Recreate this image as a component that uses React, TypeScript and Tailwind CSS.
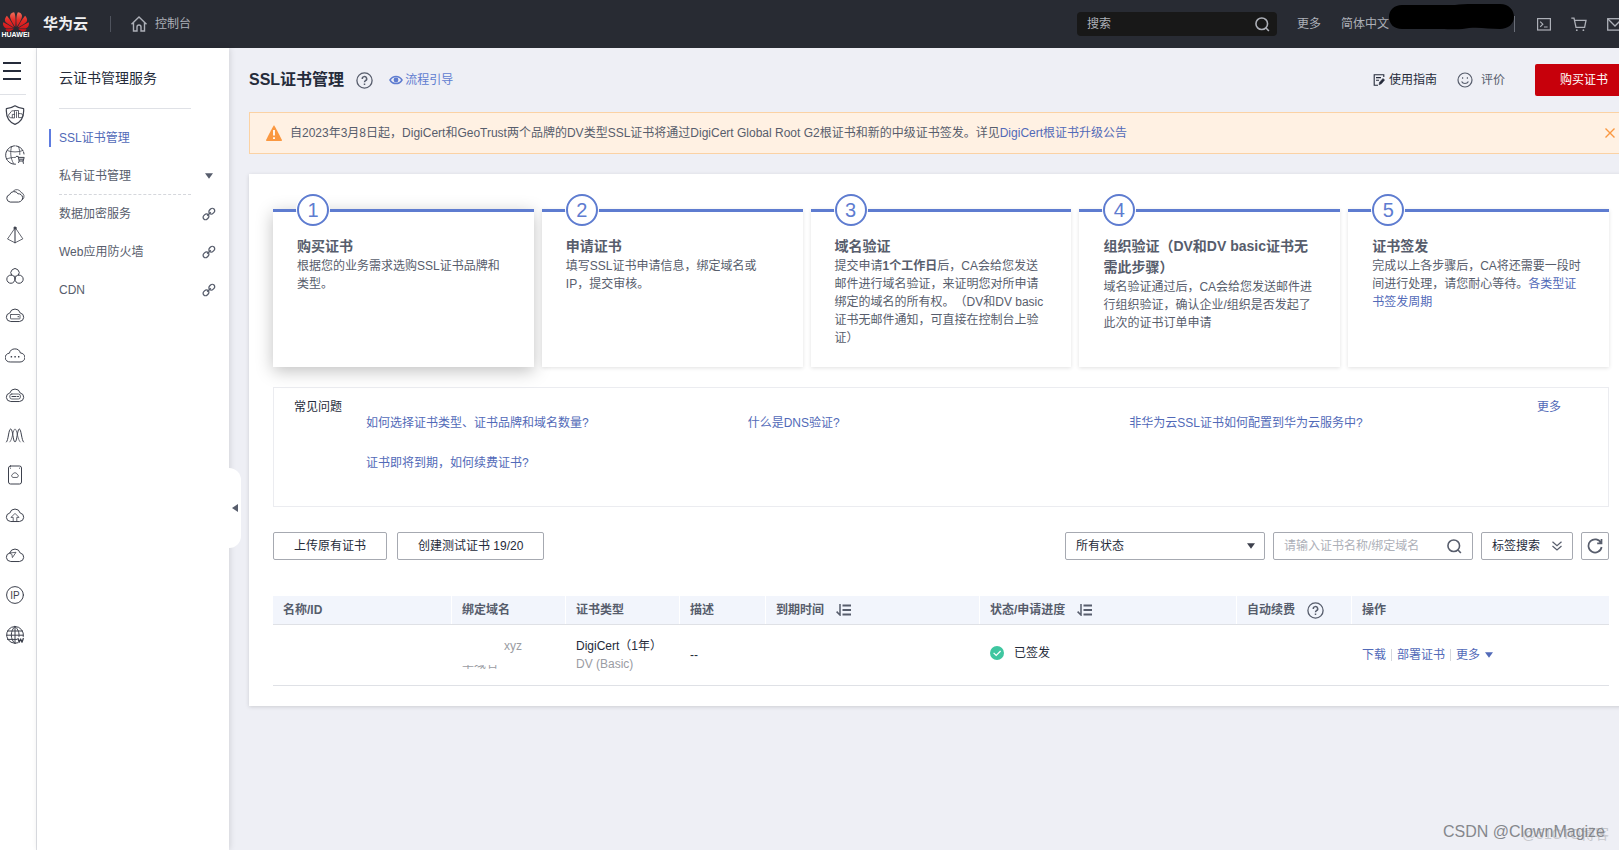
import type { ReactNode } from 'react';
import { SiHuawei } from 'react-icons/si';

const CLOUD = 'M5.4 16.5A4.3 4.3 0 0 1 4.8 8A5.4 5.4 0 0 1 15.2 8A4.3 4.3 0 0 1 14.8 16.5Z';

const railIcons: { label: string; art: ReactNode }[] = [
  {
    label: '安全',
    art: (
      <>
        <path d="M10 .8C12.5 2.6 15.5 3.4 18.6 3.6C19.2 11 16 17 10 19.4C4 17 .8 11 1.4 3.6C4.5 3.4 7.5 2.6 10 .8Z" strokeWidth="1.2" />
        <path d="M5.2 12.6A2.3 2.3 0 0 1 5.2 8.2A3.4 3.4 0 0 1 9.5 6V12.6ZM9.5 5.5H13.5V12.6H16A2 2 0 0 0 15.5 8.6H13.5M11.5 7V12.6M7.3 12.6V9.4H9.5" strokeWidth=".8" />
      </>
    ),
  },
  {
    label: '域名购买',
    art: (
      <>
        <path d="M10.5 19.2A9.2 9.2 0 1 1 19 9" strokeDasharray="9 1.2" />
        <path d="M6.5 1.8C5.2 6.5 5.2 13 8.5 18.4M13.5 1.8C14.6 4.4 14.9 7 14.8 9.5M2.3 5.6C7 7.4 13 7.4 17.7 5.6M1.5 14C5 12.6 8 12.4 10.5 12.4" strokeWidth=".8" />
        <path d="M11.3 11.4H13.2L14.2 16H18.2L19.2 12.4H13.5M14.2 16L13.6 17.6M18 16L18.4 18.4M14.5 14.2H18.5" />
      </>
    ),
  },
  {
    label: '弹性云',
    art: (
      <>
        <path d="M4.8 17A3.8 3.8 0 0 1 4.6 9.6A4.7 4.7 0 0 1 13 8.8A4 4 0 0 1 14 17Z" />
        <path d="M8.5 5.8A4.6 4.6 0 0 1 16 7.4A4.2 4.2 0 0 1 17.6 14.6" strokeWidth=".8" />
      </>
    ),
  },
  {
    label: '加速',
    art: (
      <>
        <path d="M10 3L2.5 14L10 17.8L17.5 14Z" strokeWidth=".8" />
        <path d="M10 3V17.8" strokeWidth="1.1" />
        <circle cx="10" cy="3" r="1.1" fill="currentColor" />
      </>
    ),
  },
  {
    label: '容器',
    art: <path d="M6.6 10.3A4.2 4.2 0 1 1 13.4 10.3M10 13.8A4.1 4.1 0 1 1 6.3 10.1C8.3 10 10 11.8 10 13.8A4.1 4.1 0 1 0 13.7 10.1C11.7 10 10 11.8 10 13.8M10 11V13" />,
  },
  {
    label: '云服务器',
    art: (
      <>
        <path d={CLOUD} />
        <rect x="5.5" y="9.5" width="9.5" height="4.4" rx=".5" strokeWidth=".8" />
        <path d="M13 11.7H13.6" />
      </>
    ),
  },
  {
    label: '更多云',
    art: (
      <>
        <path d="M4.8 17A4.4 4.4 0 0 1 4.4 8.2A5.7 5.7 0 0 1 15.4 8A4.5 4.5 0 0 1 15.4 17Z" />
        <path d="M5.7 11.8H7.1M9.4 11.8H10.8M13 11.8H14.4" strokeWidth="1.6" strokeLinecap="butt" />
      </>
    ),
  },
  {
    label: '云硬盘',
    art: (
      <>
        <path d={CLOUD} />
        <rect x="4.8" y="9" width="10.6" height="5" rx="2" strokeWidth=".8" />
        <path d="M7 11.5H11M12.5 11.5H13.5" strokeWidth="1.2" />
      </>
    ),
  },
  {
    label: '网络',
    art: (
      <>
        <path d="M1.5 17C3.5 15.5 3.5 4 5.7 4S8 17 10 17S12.3 4 14.3 4S16.5 15.5 18.5 17" />
        <path d="M4.8 17C7.5 15 8 4 10 4S12.5 15 15.2 17" strokeWidth=".7" />
      </>
    ),
  },
  {
    label: '存储',
    art: (
      <>
        <rect x="3.5" y="1" width="13" height="18" rx="2" />
        <path d="M7.6 12.3A1.6 1.6 0 0 1 7.7 9.3A2.4 2.4 0 0 1 12.2 9.3A1.6 1.6 0 0 1 12.4 12.3Z" strokeWidth=".8" />
        <path d="M5.5 3.2H5.6M14.4 3.2H14.5" />
      </>
    ),
  },
  {
    label: '云备份',
    art: (
      <>
        <path d={CLOUD} />
        <path d="M8.2 16.3V12.4H6L10 8.4L14 12.4H11.8V16.3" strokeWidth=".8" />
      </>
    ),
  },
  {
    label: '云专线',
    art: (
      <>
        <path d={CLOUD} />
        <path d="M4.8 8L11 7.3L7.4 12.6L7 9.8Z" strokeWidth=".8" />
      </>
    ),
  },
  {
    label: '弹性公网IP',
    art: (
      <>
        <circle cx="10" cy="10" r="8.4" />
        <text x="10" y="13.6" textAnchor="middle" fontSize="10" fill="currentColor" stroke="none">IP</text>
      </>
    ),
  },
  {
    label: '网站',
    art: (
      <>
        <path d="M13 17.8A8.4 8.4 0 1 1 18.3 11.5M10 1.6V18.4M10 1.6C5 5.5 5 14.5 10 18.4M10 1.6C13.3 4.2 14.4 8 14 11.5M2.5 6H17.5M1.6 10.2H18.3M2.5 14.4H12" />
        <path d="M13 13.5L14.2 17.2L15.6 14L17 17.2L18.3 13.5" strokeWidth="1.3" />
      </>
    ),
  },
];

const steps: { title: string; body: ReactNode }[] = [
  { title: '购买证书', body: '根据您的业务需求选购SSL证书品牌和类型。' },
  { title: '申请证书', body: '填写SSL证书申请信息，绑定域名或IP，提交审核。' },
  {
    title: '域名验证',
    body: (
      <>
        提交申请<b>1个工作日</b>后，CA会给您发送邮件进行域名验证，来证明您对所申请绑定的域名的所有权。（DV和DV basic证书无邮件通知，可直接在控制台上验证）
      </>
    ),
  },
  {
    title: '组织验证（DV和DV basic证书无需此步骤）',
    body: '域名验证通过后，CA会给您发送邮件进行组织验证，确认企业/组织是否发起了此次的证书订单申请',
  },
  {
    title: '证书签发',
    body: (
      <>
        完成以上各步骤后，CA将还需要一段时间进行处理，请您耐心等待。
        <a href="#" className="text-[#526ab8]">各类型证书签发周期</a>
      </>
    ),
  },
];

const faqs = [
  '如何选择证书类型、证书品牌和域名数量?',
  '什么是DNS验证?',
  '非华为云SSL证书如何配置到华为云服务中?',
  '证书即将到期，如何续费证书?',
];

function SearchIcon({ className }: { className?: string }) {
  return (
    <svg viewBox="0 0 16 16" className={className} fill="none" stroke="currentColor" strokeWidth="1.7">
      <circle cx="7.2" cy="7.2" r="6.2" />
      <path d="M11.5 11.5L14.8 15" />
    </svg>
  );
}

function HelpIcon() {
  return (
    <svg viewBox="0 0 17 17" className="size-[17px] text-[#575d6c]" fill="none" stroke="currentColor" strokeWidth="1.3">
      <circle cx="8.5" cy="8.5" r="7.6" />
      <path d="M6.3 7A2.2 2.2 0 1 1 9.5 8.7C8.7 9.2 8.5 9.5 8.5 10.3" strokeWidth="1.5" />
      <path d="M8.5 11.5V13" strokeWidth="1.5" />
    </svg>
  );
}

function SortIcon() {
  return (
    <svg viewBox="0 0 15 12" className="h-3 w-[15px] text-[#575d6c]" fill="none" stroke="currentColor">
      <path d="M4 0V11L.6 7.6" strokeWidth="1.5" />
      <path d="M6.5 1.5H15M6.5 6H15M6.5 10.5H15" strokeWidth="1.8" />
    </svg>
  );
}

function Caret({ className }: { className?: string }) {
  return (
    <svg viewBox="0 0 8 6" className={`h-1.5 w-2 ${className ?? ''}`} fill="currentColor">
      <path d="M0 .3H8L4 5.7Z" />
    </svg>
  );
}

function LinkIcon() {
  return (
    <svg viewBox="0 0 14 14" className="size-3.5 text-[#575d6c]" fill="none" stroke="currentColor" strokeWidth="1.3">
      <rect x="-3.1" y="-2.4" width="6.2" height="4.8" rx="2.4" transform="translate(9.8 4.2) rotate(-45)" />
      <rect x="-3.1" y="-2.4" width="6.2" height="4.8" rx="2.4" transform="translate(4 9.8) rotate(-45)" />
      <path d="M5.2 8.8L8.8 5.2" />
    </svg>
  );
}

function Header() {
  return (
    <header className="relative flex h-12 shrink-0 items-center overflow-hidden bg-[#282b33] text-[#adb0b8]">
      <a href="#" className="flex w-[31px] flex-col items-center">
        <svg width="0" height="0" className="absolute">
          <linearGradient id="petal" x1="0" y1="0" x2="0" y2="1">
            <stop offset="0" stopColor="#f0705c" />
            <stop offset=".4" stopColor="#e32b27" />
            <stop offset="1" stopColor="#c81018" />
          </linearGradient>
        </svg>
        <SiHuawei className="-mb-1 size-[26px]" fill="url(#petal)" />
        <span className="text-[7px] leading-[8px] font-bold text-white">HUAWEI</span>
      </a>
      <span className="ml-3 text-[15px] font-bold text-[#f0f0f2]">华为云</span>
      <span className="ml-[22px] h-4 w-px bg-[#4f535d]" />
      <a href="#" className="ml-5 flex items-center gap-2">
        <svg viewBox="0 0 16 16" className="size-4" fill="none" stroke="currentColor" strokeWidth="1.4">
          <path d="M.5 8.2L8 1L15.5 8.2M2.5 6.8V15H6V11A2 2 0 0 1 10 11V15H13.5V6.8" />
        </svg>
        控制台
      </a>
      <div className="ml-auto flex shrink-0 items-center">
        <label className="flex h-6 w-[200px] items-center rounded-sm bg-[#181818] pr-[7px] pl-2.5">
          <input aria-label="搜索" placeholder="搜索" className="min-w-0 flex-1 bg-transparent outline-none placeholder:text-[#adb0b8]" />
          <SearchIcon className="size-[15px]" />
        </label>
        <a href="#" className="ml-5">更多</a>
        <button className="ml-5">简体中文</button>
        <span className="-mt-3.5 flex items-center">
          <svg viewBox="0 0 125 26" className="h-[26px] w-[125px]" fill="#000">
            <path d="M13 1H66C78 -.5 100 0 111 0C120 0 125 6 125 13C125 20 119 25 111 25C100 25 92 23 80 24C72 26 60 25 52 25H13C5 25 0 20 0 13C0 6 5 1 13 1Z" />
          </svg>
        </span>
        <span className="h-4 w-px bg-[#6a6e78]" />
        <button aria-label="CloudShell" className="ml-[22px]">
          <svg viewBox="0 0 14 13" className="h-[13px] w-3.5" fill="none" stroke="currentColor" strokeWidth="1.2">
            <rect x=".6" y=".6" width="12.8" height="11.4" />
            <path d="M3.2 3.6L5.8 6.2L3.2 8.8M7 9H10.6" />
          </svg>
        </button>
        <button aria-label="购物车" className="ml-5">
          <svg viewBox="0 0 16 15" className="h-[15px] w-4" fill="none" stroke="currentColor" strokeWidth="1.3">
            <path d="M.3 1.2H3L5 10.4H13.6L15 3.4H3.6" />
            <circle cx="5.8" cy="13.2" r=".9" fill="currentColor" stroke="none" />
            <circle cx="12.4" cy="13.2" r=".9" fill="currentColor" stroke="none" />
          </svg>
        </button>
        <button aria-label="消息" className="-mr-1 ml-5">
          <svg viewBox="0 0 16 13" className="h-[13px] w-4" fill="none" stroke="currentColor" strokeWidth="1.3">
            <rect x=".7" y=".7" width="14.6" height="11.4" />
            <path d="M1 1L8 8L15 1" />
          </svg>
        </button>
      </div>
    </header>
  );
}

function Rail() {
  return (
    <nav aria-label="服务" className="w-[37px] shrink-0 border-r border-[#dfe1e6] bg-white text-[#3d414d]">
      <button aria-label="菜单" className="mt-3.5 ml-[3px] flex w-[18px] flex-col gap-1.5">
        <span className="h-0.5 w-full bg-[#252b3a]" />
        <span className="h-0.5 w-full bg-[#252b3a]" />
        <span className="h-0.5 w-full bg-[#252b3a]" />
      </button>
      <div className="mt-3.5 w-[26px] border-t border-[#dfe1e6]" />
      <ul className="mt-2.5 ml-[5px] flex flex-col gap-5">
        {railIcons.map((icon) => (
          <li key={icon.label} className="h-5">
            <a href="#" aria-label={icon.label} className="block">
              <svg viewBox="0 0 20 20" className="size-5" fill="none" stroke="currentColor" strokeLinecap="round" strokeLinejoin="round">
                {icon.art}
              </svg>
            </a>
          </li>
        ))}
      </ul>
    </nav>
  );
}

function Sidebar() {
  return (
    <aside className="relative z-10 w-48 shrink-0 bg-white px-3 text-[#575d6c] shadow-[1px_0_6px_rgba(0,0,0,0.12)]">
      <h2 className="mx-2.5 mr-[26px] flex h-[61px] items-center border-b border-[#dfe1e6] text-sm text-[#252b3a]">云证书管理服务</h2>
      <ul className="mt-2.5">
        <li className="flex h-[38px] items-center">
          <a href="#" className="flex h-[18px] items-center border-l-2 border-[#5e7ce0] pl-2 text-[#526ab8]">SSL证书管理</a>
        </li>
        <li className="flex h-[38px] items-center justify-between pr-0.5 pl-2.5">
          <a href="#">私有证书管理</a>
          <Caret className="mr-0.5" />
        </li>
        <li className="-mt-px mr-[26px] ml-2.5 border-t border-dashed border-[#d5d7dc]" />
        {['数据加密服务', 'Web应用防火墙', 'CDN'].map((item) => (
          <li key={item} className="flex h-[38px] items-center justify-between pr-px pl-2.5">
            <a href="#">{item}</a>
            <LinkIcon />
          </li>
        ))}
      </ul>
      <button aria-label="收起" className="absolute top-[420px] left-full flex h-20 w-3 items-center justify-center rounded-r-xl bg-white">
        <svg viewBox="0 0 6 8" className="h-2 w-1.5" fill="currentColor">
          <path d="M6 0V8L0 4Z" />
        </svg>
      </button>
    </aside>
  );
}

function Steps() {
  return (
    <ol className="grid grid-cols-5 gap-2">
      {steps.map((step, i) => (
        <li
          key={step.title}
          className={`relative h-[158px] border-t-3 border-[#5e7cd0] bg-white px-6 pt-6 ${
            i === 0 ? 'shadow-[0_4px_16px_rgba(0,0,0,0.25)]' : 'shadow-[0_1px_4px_rgba(0,0,0,0.12)]'
          }`}
        >
          <span className="absolute -top-[18px] left-6 flex size-8 items-center justify-center rounded-full border-2 border-[#5e7cd0] bg-white text-xl text-[#5e7cd0] ring-1 ring-white">
            {i + 1}
          </span>
          <h3 className="text-sm leading-[21px] font-bold">{step.title}</h3>
          <p className="leading-[18px]">{step.body}</p>
        </li>
      ))}
    </ol>
  );
}

function Faq() {
  return (
    <section className="mt-5 flex h-[120px] border border-[#ebecf0] pt-2.5 pr-[47px] pl-5 leading-[18px]">
      <h3 className="w-[72px] shrink-0 text-[#252b3a]">常见问题</h3>
      <ul className="mt-4 grid flex-1 grid-cols-3 content-start gap-y-[22px]">
        {faqs.map((q) => (
          <li key={q}>
            <a href="#" className="text-[#526ab8]">{q}</a>
          </li>
        ))}
      </ul>
      <a href="#" className="ml-[26px] text-[#526ab8]">更多</a>
    </section>
  );
}

function Toolbar() {
  const box = 'h-7 rounded-xs border border-[#a6a9b1] bg-white text-[#252b3a]';
  return (
    <div className="mt-[25px] flex gap-2">
      <button className={`${box} px-5`}>上传原有证书</button>
      <button className={`${box} ml-0.5 px-5`}>创建测试证书 19/20</button>
      <div className="relative ml-auto">
        <select aria-label="状态" className={`${box} w-[200px] appearance-none px-2.5`}>
          <option>所有状态</option>
        </select>
        <Caret className="pointer-events-none absolute top-[11px] right-2.5 text-[#3d414d]" />
      </div>
      <label className={`${box} flex w-[200px] items-center px-2.5`}>
        <input aria-label="证书名称/绑定域名" placeholder="请输入证书名称/绑定域名" className="min-w-0 flex-1 outline-none placeholder:text-[#adb0b8]" />
        <SearchIcon className="size-[15px] text-[#575d6c]" />
      </label>
      <button className={`${box} flex items-center gap-3 px-2.5`}>
        标签搜索
        <svg viewBox="0 0 10 10" className="size-2.5 text-[#575d6c]" fill="none" stroke="currentColor" strokeWidth="1.2">
          <path d="M.5 .8L5 4.8L9.5 .8M.5 5L5 9L9.5 5" />
        </svg>
      </button>
      <button aria-label="刷新" className={`${box} flex w-7 items-center justify-center`}>
        <svg viewBox="0 0 16 16" className="size-4 text-[#575d6c]" fill="none" stroke="currentColor" strokeWidth="1.7">
          <path d="M14 5A6.6 6.6 0 1 0 14.6 9M14.5 1V5.3H10.2" />
        </svg>
      </button>
    </div>
  );
}

function CertTable() {
  const th = 'h-7 border-r border-white px-2.5 text-left font-bold last:border-r-0';
  return (
    <table className="mt-9 w-full table-fixed border-separate border-spacing-0 leading-[18px]">
      <colgroup>
        <col className="w-[179px]" />
        <col className="w-[114px]" />
        <col className="w-[114px]" />
        <col className="w-[86px]" />
        <col className="w-[214px]" />
        <col className="w-[257px]" />
        <col className="w-[115px]" />
        <col />
      </colgroup>
      <thead className="bg-[#f2f5fc]">
        <tr>
          <th className={th}>名称/ID</th>
          <th className={th}>绑定域名</th>
          <th className={th}>证书类型</th>
          <th className={th}>描述</th>
          <th className={th}>
            <span className="flex items-center gap-3">到期时间 <SortIcon /></span>
          </th>
          <th className={th}>
            <span className="flex items-center gap-3">状态/申请进度 <SortIcon /></span>
          </th>
          <th className={th}>
            <span className="flex items-center gap-3">自动续费 <HelpIcon /></span>
          </th>
          <th className={th}>操作</th>
        </tr>
      </thead>
      <tbody className="text-[#252b3a] [&_td]:h-[62px] [&_td]:border-y [&_td]:border-[#dfe1e6] [&_td]:px-2.5">
        <tr>
          <td />
          <td className="text-[#9a9ca3]">
            <div className="pl-[42px]">xyz</div>
            {/* only the foot of this line shows */}
            <div className="flex h-[18px] items-start pt-2.5">
              <div className="flex h-1.5 items-end overflow-hidden leading-[14px]">单域名</div>
            </div>
          </td>
          <td>
            <div>DigiCert（1年）</div>
            <div className="text-[#9a9ca3]">DV (Basic)</div>
          </td>
          <td>--</td>
          <td />
          <td>
            <span className="flex items-center gap-2.5 pb-1">
              <svg viewBox="0 0 14 14" className="size-3.5">
                <circle cx="7" cy="7" r="7" fill="#3fc6a0" />
                <path d="M3.6 6.8L6.2 9.4L10.6 5" fill="none" stroke="#fff" strokeWidth="1.2" />
              </svg>
              已签发
            </span>
          </td>
          <td />
          <td>
            <span className="flex items-center text-[#526ab8]">
              <a href="#">下载</a>
              <span className="mx-[5px] h-3 w-px bg-[#d5d7dc]" />
              <a href="#">部署证书</a>
              <span className="mx-[5px] h-3 w-px bg-[#d5d7dc]" />
              <button className="flex items-center gap-[5px]">
                更多 <Caret />
              </button>
            </span>
          </td>
        </tr>
      </tbody>
    </table>
  );
}

export default function App() {
  return (
    <div className="relative flex min-h-screen flex-col overflow-hidden bg-[#eeeff5] font-['Liberation_Sans','Noto_Sans_CJK_SC',sans-serif] text-xs text-[#575d6c] [text-spacing-trim:space-all]">
      <Header />
      <div className="flex flex-1">
        <Rail />
        <Sidebar />
        {/* content runs slightly past the right edge of the window */}
        <main className="-mr-3.5 min-w-0 flex-1 pt-4 pl-5">
          <div className="flex h-8 items-center">
            <h1 className="text-base font-bold text-[#252b3a]">SSL证书管理</h1>
            <button aria-label="帮助" className="ml-3">
              <HelpIcon />
            </button>
            <a href="#" className="ml-4 flex items-center gap-0.5 text-[#5e7cd0]">
              <svg viewBox="0 0 14 10" className="h-2.5 w-3.5" fill="none" stroke="currentColor">
                <path d="M1 5C3.8 .2 10.2 .2 13 5C10.2 9.8 3.8 9.8 1 5Z" strokeWidth="1.5" />
                <circle cx="7" cy="5" r="2.4" fill="currentColor" stroke="none" />
              </svg>
              流程引导
            </a>
            <a href="#" className="ml-auto flex items-center gap-1 text-[#252b3a]">
              <svg viewBox="0 0 12 12" className="size-3" fill="none" stroke="currentColor" strokeWidth="1.1">
                <path d="M5 11.2H1.2V.8H10.8V3M3 3.6H8M3 6.2H6" />
                <path d="M6 10.8L6.6 8.2L10 4.4L11.6 6L8.4 9.8Z" fill="currentColor" strokeWidth=".5" />
              </svg>
              使用指南
            </a>
            <button className="mr-[30px] ml-5 flex items-center gap-2">
              <svg viewBox="0 0 16 16" className="size-4" fill="none" stroke="currentColor" strokeWidth="1.2">
                <circle cx="8" cy="8" r="7" />
                <path d="M4.6 9.4C6 12.2 10 12.2 11.4 9.4M5.6 5.2V6.8M10.4 5.2V6.8" />
              </svg>
              评价
            </button>
            <button className="h-8 rounded-xs bg-[#c7000b] px-[25px] text-white">购买证书</button>
          </div>

          <div role="alert" className="mt-4 flex h-[42px] items-center border border-[#fbd2a4] bg-[#fff1e3] pr-[17px] pl-4">
            <svg viewBox="0 0 16 16" className="size-4">
              <path d="M8 .3C8.5 .3 15 13 16 15.2C16 15.7 15.7 16 15.2 16H.8C.3 16 0 15.7 0 15.2C1 13 7.5 .3 8 .3Z" fill="#fa9841" />
              <path d="M8 5V10.6M8 12.2V14" stroke="#fff" strokeWidth="1.8" />
            </svg>
            <p className="ml-2">
              自2023年3月8日起，DigiCert和GeoTrust两个品牌的DV类型SSL证书将通过DigiCert Global Root G2根证书和新的中级证书签发。详见
              <a href="#" className="text-[#526ab8]">DigiCert根证书升级公告</a>
            </p>
            <button aria-label="关闭" className="ml-auto">
              <svg viewBox="0 0 10 10" className="size-2.5" stroke="#fa9841" strokeWidth="1.4">
                <path d="M.5 .5L9.5 9.5M9.5 .5L.5 9.5" />
              </svg>
            </button>
          </div>

          <div className="mt-5 bg-white px-6 pt-[35px] pb-5 shadow-[0_1px_4px_rgba(0,0,0,0.14)]">
            <Steps />
            <Faq />
            <Toolbar />
            <CertTable />
          </div>
        </main>
      </div>

      <span className="absolute right-2.5 bottom-1.5 text-sm text-[#c6c7cc]">@51CTO博客</span>
      <span className="absolute right-3.5 bottom-1.5 text-base text-[#85878c]">CSDN @ClownMagize</span>
    </div>
  );
}
